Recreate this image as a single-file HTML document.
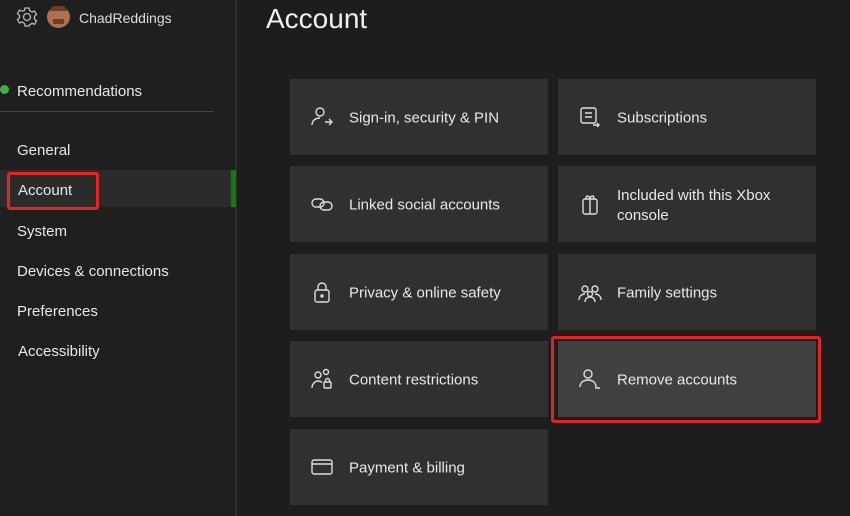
<!DOCTYPE html><html><head><style>
*{margin:0;padding:0;box-sizing:border-box}
body{width:850px;height:516px;background:#1d1d1d;font-family:"Liberation Sans",sans-serif;color:#e8e8e8;position:relative;overflow:hidden}
.side{position:absolute;left:0;top:0;width:237px;height:516px;background:#1f1f1f;border-right:2px solid #2e2e2e}
.t{position:absolute;font-size:15px}
.tile{position:absolute;width:258px;height:76px;background:#303030;display:flex;align-items:center;font-size:15px}
.tile svg{position:absolute;left:20px;top:50%;transform:translateY(-50%)}
.tile span{position:absolute;left:59px;top:50%;transform:translateY(-45%)}
</style></head><body>
<div class="side">
<svg style="position:absolute;left:16px;top:6px" width="22" height="22" viewBox="0 0 22 22" fill="none" stroke="#bbb" stroke-width="1.3"><circle cx="11" cy="11" r="3.5"/><path d="M9 2h4l.6 2.6 2.4 1.4 2.5-.9 2 3.4-2 1.8v2.8l2 1.8-2 3.4-2.5-.9-2.4 1.4L13 20H9l-.6-2.6-2.4-1.4-2.5.9-2-3.4 2-1.8V9.4l-2-1.8 2-3.4 2.5.9L8.4 4.6z"/></svg>
<div style="position:absolute;left:47px;top:6px;width:23px;height:22px;border-radius:50%;background:#b07050"><div style="position:absolute;left:3px;top:0;width:17px;height:5px;background:#6a3f28;border-radius:8px 8px 0 0"></div><div style="position:absolute;left:6px;top:13px;width:11px;height:5px;background:#6a3f28"></div></div>
<div class="t" style="left:79px;top:10px;font-size:14px;color:#ddd">ChadReddings</div>
<div style="position:absolute;left:0;top:85px;width:9px;height:9px;border-radius:50%;background:#3fb23f"></div>
<div class="t" style="left:17px;top:83px">Recommendations</div>
<div style="position:absolute;left:0;top:111px;width:214px;height:1px;background:#444"></div>
<div class="t" style="left:17px;top:142px">General</div>
<div style="position:absolute;left:0;top:170px;width:235px;height:37px;background:#2b2b2b"></div>
<div style="position:absolute;left:231px;top:170px;width:5px;height:37px;background:#107c10"></div>
<div class="t" style="left:18px;top:182px">Account</div>
<div style="position:absolute;left:7px;top:172px;width:92px;height:38px;border:3px solid #e0242a;border-radius:3px"></div>
<div class="t" style="left:17px;top:223px">System</div>
<div class="t" style="left:17px;top:263px">Devices &amp; connections</div>
<div class="t" style="left:17px;top:303px">Preferences</div>
<div class="t" style="left:18px;top:343px">Accessibility</div>
</div>
<div class="t" style="left:266px;top:3px;font-size:28px;color:#f0f0f0">Account</div>

<div class="tile" style="left:290px;top:79px"><svg width="24" height="24" viewBox="0 0 24 24" fill="none" stroke="#ddd" stroke-width="1.4"><circle cx="10" cy="7" r="4"/><path d="M2 20c0-4 3-7 8-7M15 17h7M19 14l3 3-3 3"/></svg><span>Sign-in, security &amp; PIN</span></div>
<div class="tile" style="left:558px;top:79px"><svg width="24" height="24" viewBox="0 0 24 24" fill="none" stroke="#ddd" stroke-width="1.4"><rect x="3" y="3" width="15" height="15" rx="2"/><path d="M7 8h7M7 12h7M15 20h6M19 18l2 2-2 2"/></svg><span>Subscriptions</span></div>
<div class="tile" style="left:290px;top:166px"><svg width="24" height="24" viewBox="0 0 24 24" fill="none" stroke="#ddd" stroke-width="1.4"><rect x="2" y="7" width="12" height="8" rx="4"/><rect x="10" y="10" width="12" height="8" rx="4"/></svg><span>Linked social accounts</span></div>
<div class="tile" style="left:558px;top:166px"><svg width="24" height="24" viewBox="0 0 24 24" fill="none" stroke="#ddd" stroke-width="1.4"><rect x="5" y="7" width="14" height="15" rx="2"/><path d="M12 7v15M9 7c-3-4 3-4 3 0 0-4 6-4 3 0"/></svg><span style="line-height:20px">Included with this Xbox<br>console</span></div>
<div class="tile" style="left:290px;top:254px"><svg width="24" height="24" viewBox="0 0 24 24" fill="none" stroke="#ddd" stroke-width="1.4"><rect x="5" y="10" width="14" height="12" rx="2"/><path d="M8 10V7a4 4 0 0 1 8 0v3"/><circle cx="12" cy="16" r="1"/></svg><span>Privacy &amp; online safety</span></div>
<div class="tile" style="left:558px;top:254px"><svg width="24" height="24" viewBox="0 0 24 24" fill="none" stroke="#ddd" stroke-width="1.4"><circle cx="7" cy="9" r="3"/><circle cx="17" cy="9" r="3"/><circle cx="12" cy="14" r="2.5"/><path d="M1 20c0-4 3-6 6-6M23 20c0-4-3-6-6-6M7 22c0-3 2-5 5-5s5 2 5 5"/></svg><span>Family settings</span></div>
<div class="tile" style="left:290px;top:341px"><svg width="24" height="24" viewBox="0 0 24 24" fill="none" stroke="#ddd" stroke-width="1.4"><circle cx="8" cy="8" r="3"/><circle cx="16" cy="5" r="2.5"/><path d="M2 21c0-4 3-7 6-7 2 0 3 .5 4 1.5"/><rect x="14" y="15" width="7" height="6" rx="1"/><path d="M15.5 15v-1.5a2 2 0 0 1 4 0V15"/></svg><span>Content restrictions</span></div>
<div class="tile" style="left:558px;top:341px;background:#404040"><svg width="24" height="24" viewBox="0 0 24 24" fill="none" stroke="#ddd" stroke-width="1.4"><circle cx="10" cy="7" r="4"/><path d="M2 20c0-4 3-7 8-7s8 3 8 7M17 21h5"/></svg><span>Remove accounts</span></div>
<div style="position:absolute;left:551px;top:336px;width:270px;height:87px;border:3px solid #e0242a;border-radius:3px"></div>
<div class="tile" style="left:290px;top:429px"><svg width="24" height="24" viewBox="0 0 24 24" fill="none" stroke="#ddd" stroke-width="1.4"><rect x="2" y="5" width="20" height="14" rx="2"/><path d="M2 9h20"/></svg><span>Payment &amp; billing</span></div>
</body></html>
